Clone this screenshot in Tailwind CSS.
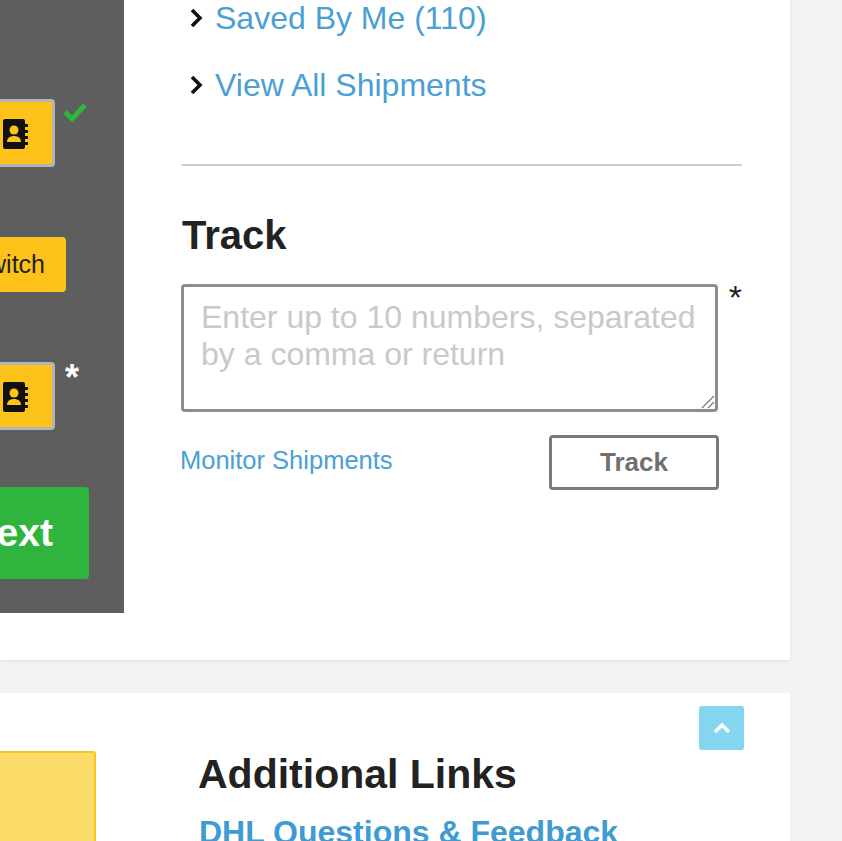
<!DOCTYPE html>
<html lang="en">
<head>
<meta charset="utf-8">
<title>Track</title>
<script src="https://cdn.jsdelivr.net/npm/@tailwindcss/browser@4"></script>
</head>
<body class="m-0 bg-[#f3f3f2] font-['Liberation_Sans',Arial,sans-serif] text-[#222]">
<div class="w-[842px] h-[841px] overflow-hidden flex flex-col gap-[33px]">

  <section class="w-[790px] h-[660px] shrink-0 bg-white flex shadow-[0_1px_4px_rgba(0,0,0,0.08)]">
    <aside class="w-[124px] h-[613px] shrink-0 bg-[#5e5e5e] flex flex-col items-start pt-[99px]">
      <div class="flex items-start">
        <div class="w-[55px] h-[68px] bg-[#fdc31a] border-[3px] border-l-0 border-[#b5b5b5] rounded-r-[4px] flex items-center justify-end pr-[23px]">
          <svg class="mt-[2px]" width="27" height="30" viewBox="0 0 27 30"><rect x="1" y="0" width="22" height="30" rx="2" fill="#111"/><path d="M23 5h3v3h-3zM23 11h3v3h-3zM23 17h3v3h-3zM23 23h3v3h-3z" fill="#111"/><circle cx="12" cy="11" r="4.5" fill="#fdc31a"/><path d="M5 23c0-4 3-6 7-6s7 2 7 6z" fill="#fdc31a"/></svg>
        </div>
        <svg class="ml-[7px] mt-[2px]" width="26" height="22" viewBox="0 0 26 22"><path d="M3 11l7 7L23 4" fill="none" stroke="#2fb53d" stroke-width="5"/></svg>
      </div>
      <button class="mt-[70px] w-[66px] h-[55px] bg-[#fdc31a] rounded-r-[4px] flex items-center justify-end overflow-hidden pr-[21px] text-[25px] text-[#222] whitespace-nowrap">Switch</button>
      <div class="mt-[70px] flex items-start">
        <div class="w-[55px] h-[68px] bg-[#fdc31a] border-[3px] border-l-0 border-[#b5b5b5] rounded-r-[4px] flex items-center justify-end pr-[23px]">
          <svg class="mt-[2px]" width="27" height="30" viewBox="0 0 27 30"><rect x="1" y="0" width="22" height="30" rx="2" fill="#111"/><path d="M23 5h3v3h-3zM23 11h3v3h-3zM23 17h3v3h-3zM23 23h3v3h-3z" fill="#111"/><circle cx="12" cy="11" r="4.5" fill="#fdc31a"/><path d="M5 23c0-4 3-6 7-6s7 2 7 6z" fill="#fdc31a"/></svg>
        </div>
        <span class="ml-[10px] -mt-[1px] text-[36px] leading-[34px] font-bold text-white">*</span>
      </div>
      <button class="mt-[57px] w-[89px] h-[92px] bg-[#2fb53d] rounded-r-[4px] flex items-center justify-end overflow-hidden pr-[36px] text-[39px] font-bold text-white whitespace-nowrap">Next</button>
    </aside>

    <div class="w-[561px] ml-[57px] flex flex-col">
      <ul class="flex flex-col gap-[33px] pt-[1px]">
        <li class="flex items-center h-[34px]">
          <svg class="ml-[9px] mr-[12px]" width="13" height="20" viewBox="0 0 13 20"><path d="M2 2l8 8-8 8" fill="none" stroke="#111" stroke-width="3.6"/></svg>
          <a class="text-[32px] leading-[34px] text-[#4a9fd4]">Saved By Me (110)</a>
        </li>
        <li class="flex items-center h-[34px]">
          <svg class="ml-[9px] mr-[12px]" width="13" height="20" viewBox="0 0 13 20"><path d="M2 2l8 8-8 8" fill="none" stroke="#111" stroke-width="3.6"/></svg>
          <a class="text-[32px] leading-[34px] text-[#4a9fd4]">View All Shipments</a>
        </li>
      </ul>
      <hr class="mt-[62px] border-0 h-[2px] bg-[#cfcfcf]">
      <h2 class="mt-[46px] ml-[1px] text-[40px] leading-[46px] font-bold text-[#222]">Track</h2>
      <div class="mt-[26px] flex items-start">
        <div class="relative w-[539px] h-[128px]">
          <textarea class="block w-full h-full resize-none border-[3px] border-[#8d8d8d] rounded-[4px] pl-[17px] pr-[10px] pt-[12px] text-[32px] leading-[37px] outline-none placeholder:text-[#c9c9c9]" placeholder="Enter up to 10 numbers, separated by a comma or return"></textarea>
          <svg class="absolute right-[3px] bottom-[3px]" width="15" height="15" viewBox="0 0 15 15"><path d="M2 14L14 2M8 14l6-6" stroke="#777" stroke-width="1.2" fill="none"/></svg>
        </div>
        <span class="ml-[11px] -mt-[2px] text-[34px] leading-[30px] text-[#222]">*</span>
      </div>
      <div class="mt-[24px] w-[538px] flex items-start justify-between">
        <a class="mt-[9px] -ml-[1px] text-[25.5px] leading-[30px] text-[#4a9fd4]">Monitor Shipments</a>
        <button class="-mt-[1px] w-[170px] h-[55px] border-[3px] border-[#7a7a7a] rounded-[4px] bg-white text-[26px] font-bold text-[#6f6f6f]">Track</button>
      </div>
    </div>
  </section>

  <section class="relative w-[790px] h-[300px] shrink-0 bg-white flex">
    <div class="w-[96px] h-[200px] mt-[58px] shrink-0 bg-[#fcdc68] border-2 border-l-0 border-[#fcc41a] rounded-tr-[3px]"></div>
    <div class="ml-[103px] pt-[58px]">
      <h2 class="-ml-[1px] text-[41px] leading-[46px] font-bold text-[#222]">Additional Links</h2>
      <a class="block mt-[17px] text-[32px] leading-[36px] font-bold text-[#3f9bd2] whitespace-nowrap">DHL Questions &amp; Feedback</a>
    </div>
    <button class="absolute left-[699px] top-[13px] w-[45px] h-[44px] rounded-[3px] bg-[#85d4f0] flex items-center justify-center">
      <svg width="18" height="12" viewBox="0 0 18 12"><path d="M2 10l7-7 7 7" fill="none" stroke="#fff" stroke-width="3.6"/></svg>
    </button>
  </section>
</div>
</body>
</html>
